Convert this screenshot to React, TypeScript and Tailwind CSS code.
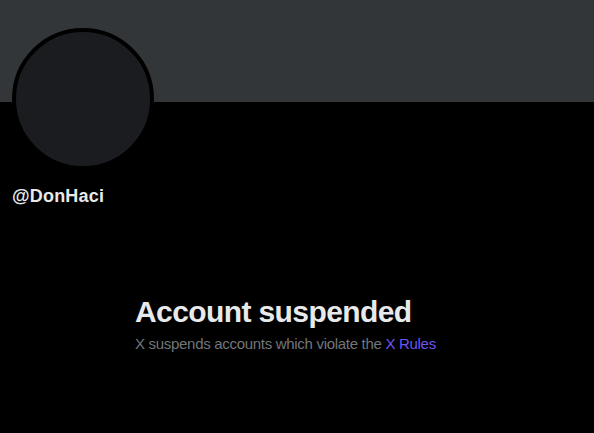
export default function App() {
  return (
    <div className="h-[433px] w-full overflow-hidden bg-black font-['Liberation_Sans',Arial,sans-serif] text-[#e7e9ea]">
      <div className="h-[102px] bg-[#333639]" />
      <div className="px-3">
        <div className="-mt-[74px] h-[142px] w-[142px] rounded-full border-4 border-black bg-[#1a1c1f]" />
        <div className="mt-[16px] text-[18px] font-bold leading-5 tracking-[0.2px]">@DonHaci</div>
      </div>
      <div className="mt-[88px] pl-[135px]">
        <h1 className="text-[30px] font-extrabold leading-9 tracking-[-0.6px]">Account suspended</h1>
        <p className="mt-[4px] text-[15px] leading-5 tracking-[-0.3px] text-[#71767b]">
          X suspends accounts which violate the <span className="text-[#6b55f5]">X Rules</span>
        </p>
      </div>
    </div>
  );
}
